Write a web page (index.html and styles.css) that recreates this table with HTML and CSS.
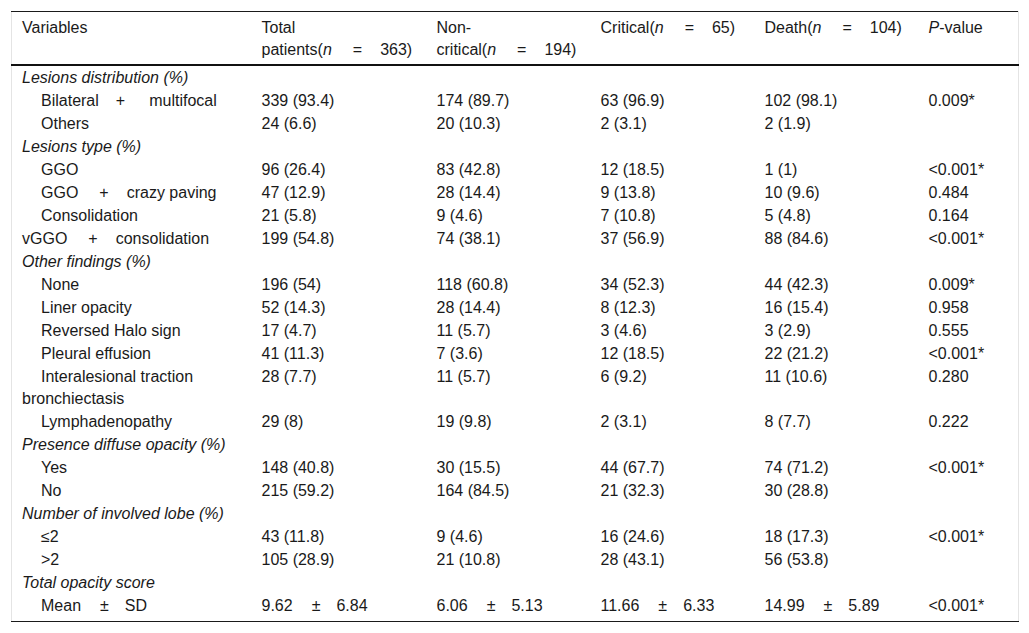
FILE: index.html
```html
<!DOCTYPE html>
<html>
<head>
<meta charset="utf-8">
<link rel="stylesheet" href="styles.css">
</head>
<body>
<div class="wrap">
<table class="data">
<colgroup>
<col class="c1"><col class="c2"><col class="c3"><col class="c4"><col class="c5"><col class="c6">
</colgroup>
<thead>
<tr>
<th>Variables</th>
<th>Total <span class="nw">patients(<i>n</i><span class="op">=</span>363)</span></th>
<th>Non-<span class="nw">critical(<i>n</i><span class="op">=</span>194)</span></th>
<th><span class="nw">Critical(<i>n</i><span class="op">=</span>65)</span></th>
<th><span class="nw">Death(<i>n</i><span class="op">=</span>104)</span></th>
<th><i>P</i>-value</th>
</tr>
</thead>
<tbody>
<tr><td class="grp">Lesions distribution (%)</td><td></td><td></td><td></td><td></td><td></td></tr>
<tr><td class="sub">Bilateral<span class="op op-b">+</span>multifocal</td><td>339 (93.4)</td><td>174 (89.7)</td><td>63 (96.9)</td><td>102 (98.1)</td><td>0.009*</td></tr>
<tr><td class="sub">Others</td><td>24 (6.6)</td><td>20 (10.3)</td><td>2 (3.1)</td><td>2 (1.9)</td><td></td></tr>
<tr><td class="grp">Lesions type (%)</td><td></td><td></td><td></td><td></td><td></td></tr>
<tr><td class="sub">GGO</td><td>96 (26.4)</td><td>83 (42.8)</td><td>12 (18.5)</td><td>1 (1)</td><td>&lt;0.001*</td></tr>
<tr><td class="sub">GGO<span class="op">+</span>crazy paving</td><td>47 (12.9)</td><td>28 (14.4)</td><td>9 (13.8)</td><td>10 (9.6)</td><td>0.484</td></tr>
<tr><td class="sub">Consolidation</td><td>21 (5.8)</td><td>9 (4.6)</td><td>7 (10.8)</td><td>5 (4.8)</td><td>0.164</td></tr>
<tr><td>vGGO<span class="op">+</span>consolidation</td><td>199 (54.8)</td><td>74 (38.1)</td><td>37 (56.9)</td><td>88 (84.6)</td><td>&lt;0.001*</td></tr>
<tr><td class="grp">Other findings (%)</td><td></td><td></td><td></td><td></td><td></td></tr>
<tr><td class="sub">None</td><td>196 (54)</td><td>118 (60.8)</td><td>34 (52.3)</td><td>44 (42.3)</td><td>0.009*</td></tr>
<tr><td class="sub">Liner opacity</td><td>52 (14.3)</td><td>28 (14.4)</td><td>8 (12.3)</td><td>16 (15.4)</td><td>0.958</td></tr>
<tr><td class="sub">Reversed Halo sign</td><td>17 (4.7)</td><td>11 (5.7)</td><td>3 (4.6)</td><td>3 (2.9)</td><td>0.555</td></tr>
<tr><td class="sub">Pleural effusion</td><td>41 (11.3)</td><td>7 (3.6)</td><td>12 (18.5)</td><td>22 (21.2)</td><td>&lt;0.001*</td></tr>
<tr><td class="sub">Interalesional traction bronchiectasis</td><td>28 (7.7)</td><td>11 (5.7)</td><td>6 (9.2)</td><td>11 (10.6)</td><td>0.280</td></tr>
<tr><td class="sub">Lymphadenopathy</td><td>29 (8)</td><td>19 (9.8)</td><td>2 (3.1)</td><td>8 (7.7)</td><td>0.222</td></tr>
<tr><td class="grp">Presence diffuse opacity (%)</td><td></td><td></td><td></td><td></td><td></td></tr>
<tr><td class="sub">Yes</td><td>148 (40.8)</td><td>30 (15.5)</td><td>44 (67.7)</td><td>74 (71.2)</td><td>&lt;0.001*</td></tr>
<tr><td class="sub">No</td><td>215 (59.2)</td><td>164 (84.5)</td><td>21 (32.3)</td><td>30 (28.8)</td><td></td></tr>
<tr><td class="grp">Number of involved lobe (%)</td><td></td><td></td><td></td><td></td><td></td></tr>
<tr><td class="sub">≤2</td><td>43 (11.8)</td><td>9 (4.6)</td><td>16 (24.6)</td><td>18 (17.3)</td><td>&lt;0.001*</td></tr>
<tr><td class="sub">&gt;2</td><td>105 (28.9)</td><td>21 (10.8)</td><td>28 (43.1)</td><td>56 (53.8)</td><td></td></tr>
<tr><td class="grp">Total opacity score</td><td></td><td></td><td></td><td></td><td></td></tr>
<tr class="last"><td class="sub">Mean<span class="pm">±</span>SD</td><td>9.62<span class="pm">±</span>6.84</td><td>6.06<span class="pm">±</span>5.13</td><td>11.66<span class="pm">±</span>6.33</td><td>14.99<span class="pm">±</span>5.89</td><td>&lt;0.001*</td></tr>
</tbody>
</table>
</div>
</body>
</html>
```
FILE: styles.css
```css
html, body {
  margin: 0;
  padding: 0;
  background: #fff;
}
.wrap {
  padding: 11px 0 0 11px;
}
.data {
  width: 1007px;
  table-layout: fixed;
  border-collapse: collapse;
  font-family: "Liberation Sans", Arial, sans-serif;
  font-size: 16px;
  line-height: 22px;
  color: #1a1a1a;
  border-left: 1px solid #e4e4e4;
  border-right: 1px solid #e4e4e4;
  border-top: 1px solid #1a1a1a;
  border-bottom: 1px solid #1a1a1a;
}
.c1 { width: 240px; }
.c2 { width: 175px; }
.c3 { width: 164px; }
.c4 { width: 164px; }
.c5 { width: 164px; }
.c6 { width: 100px; }
.data th {
  text-align: left;
  font-weight: normal;
  vertical-align: top;
  padding: 5px 10px 3px 10px;
  border-bottom: 2px solid #111;
}
.nw {
  white-space: nowrap;
}
.data td {
  vertical-align: top;
  padding: 1px 10px 0 10px;
}
.data td.grp {
  font-style: italic;
}
.data td.sub {
  text-indent: 19px;
}
.op {
  display: inline-block;
  text-indent: 0;
  margin: 0 18px 0 21px;
}
.op-b {
  margin: 0 24px 0 17px;
}
.pm {
  display: inline-block;
  text-indent: 0;
  margin: 0 16px 0 19px;
}
.data tr.last td {
  padding-bottom: 4px;
}
```
